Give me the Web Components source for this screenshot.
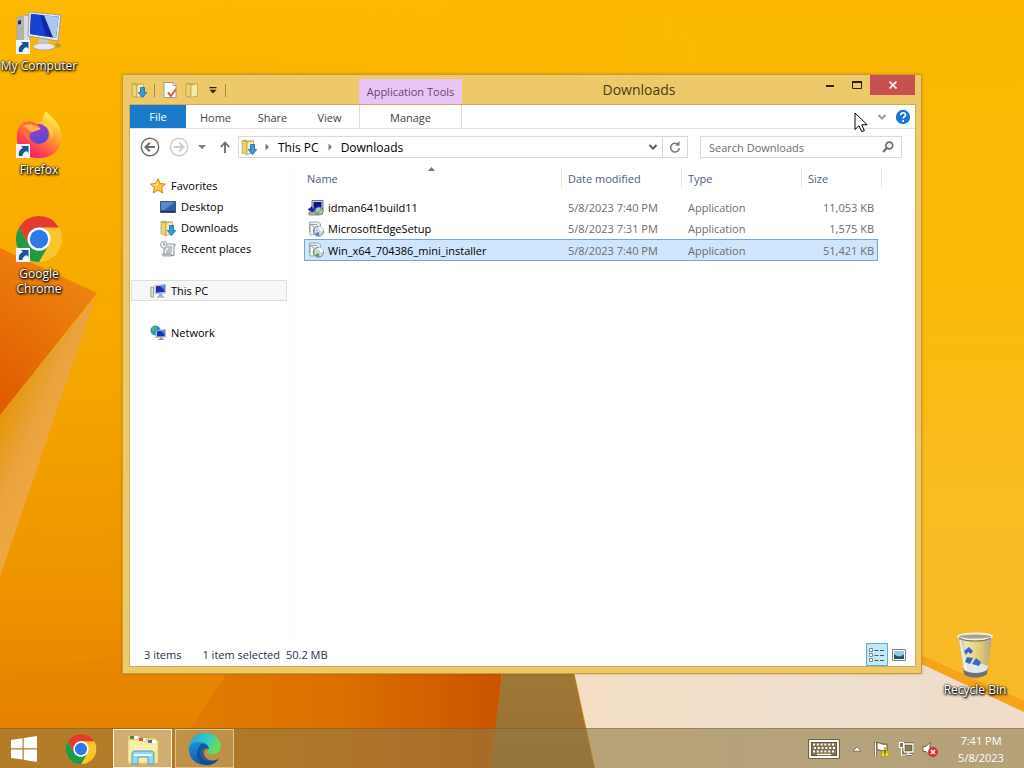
<!DOCTYPE html>
<html lang="en">
<head>
<meta charset="utf-8">
<title>Desktop</title>
<style>
html, body { margin: 0; height: 100%; overflow: hidden; }
body { font: 11px/15px "Open Sans", "Noto Sans", sans-serif; color: #000; }
</style>
</head>
<body>
<desktop-shell></desktop-shell>
<script>
const folder = (x) => `<path d="M1 1.5 5 .5l1 1h6.5V15H3z" fill="#cfae3f"/><path d="M1 1.5 6 3v12.5L1 14z" fill="#ecd473" stroke="#b79a3c" stroke-width=".7"/><path d="M6 3l6.5-1.2v12L6 15.500z" fill="#f8eba9" stroke="#b99d45" stroke-width=".7"/>${x}`;
const blueArrow = `<path d="M9.500 5.500h4v5h2.200L11.500 15.600 7.300 10.500h2.200z" fill="#2f9be0" stroke="#1767a8" stroke-width=".8"/>`;
const shortcut = `<rect x="1" y="33" width="14" height="14" fill="#f3f6fa"/><path d="M4 45c-1-4 1-7 4-8l-2-2h7.500v7l-2-2c-3 1-4 3-4 5z" fill="#1a5390"/>`;
const chrome = `<circle cx="24" cy="24" r="23" fill="#fbc62c"/><path d="M24 1A23 23 0 0 0 4.080 12.500L14 29.700 24 12.500h19.920A23 23 0 0 0 24 1z" fill="#e33b2e"/><path d="M4.080 12.500A23 23 0 0 0 24 47l9.960-17.250A11.500 11.500 0 0 1 14.040 29.750z" fill="#219a48"/><circle cx="24" cy="24" r="11.500" fill="#fff"/><circle cx="24" cy="24" r="9.200" fill="#2b79ea"/>`;
const disc = (c) => `<path d="M1.500 1h9l2 2v8h-11z" fill="#e9eef4" stroke="#8795a3" stroke-width=".8"/><path d="M3 3.500h6M3 5.500h3M3 7.500h3" stroke="#7d9cba" stroke-width=".9"/><path d="M2 14V3l4 3v8z" fill="#f7f7f2" stroke="#8a8a7a" stroke-width=".7"/><circle cx="10.500" cy="10.200" r="5" fill="#cfdce6" stroke="#5f7286" stroke-width=".9"/><path d="M10.500 5.200A5 5 0 0 1 15.500 10l-5 .2z" fill="#f4f9fc"/><path d="M6.500 13.500l4-3.300 1 5z" fill="${c}"/><circle cx="10.500" cy="10.200" r="1.300" fill="#fff" stroke="#74879a" stroke-width=".5"/><path d="M5 8l2 1.500L5 12z" fill="${c}"/>`;
const monitor = `<path d="M5 2.500 15.500 1.500v8.500L5 10.500z" fill="#d7dde6" stroke="#8e98a8" stroke-width=".6"/><path d="M6 3.300l8.700-.8v6.600L6 9.700z" fill="#1b2fb5"/><path d="M10 3l4.700-.5v5z" fill="#5f82e8"/><path d="M9 10.500h3l1 3H8.500z" fill="#a9b0bd"/><path d="M7 13.500h7v1H7z" fill="#8b93a2"/>`;
const ICONS = {
  folderDown: [16, folder(blueArrow)],
  folder: [16, folder('')],
  properties: [16, `<path d="M2 .5h9l3 3v12H2z" fill="#fff" stroke="#8e8b86" stroke-width=".8"/><path d="M11 .5v3h3" fill="#e5e5e5" stroke="#8e8b86" stroke-width=".7"/><path d="M6 10.500l3 3.500 5-7" fill="none" stroke="#e2592f" stroke-width="2"/>`],
  customise: [10, `<path d="M1.500 2h7v1.200h-7zM1.500 4.800h7L5 8.500z" fill="#2c220c"/>`],
  minimise: [12, `<path d="M2 6h8v2H2z" fill="#2b210c"/>`],
  maximise: [12, `<path d="M1.500 2.500h9v7h-9z" fill="none" stroke="#2b210c"/><path d="M1 2h10v2H1z" fill="#2b210c"/>`],
  close: [10, `<path d="M1.500 1.500l7 7m0-7l-7 7" stroke="#fff" stroke-width="1.700" fill="none"/>`],
  help: [16, `<circle cx="8" cy="8" r="7.200" fill="#1976d2"/><path d="M5.700 6.300c0-3.400 4.800-3.200 4.800-.4 0 1.900-2.300 1.800-2.300 3.700M8.200 11v1.900" fill="none" stroke="#fff" stroke-width="1.700"/>`],
  chevron: [10, `<path d="M1.500 3l3.500 3.700L8.500 3" fill="none" stroke="currentColor" stroke-width="1.900"/>`],
  back: [20, `<circle cx="10" cy="10" r="8.700" fill="none" stroke="currentColor" stroke-width="1.400"/><path d="M5.500 10h9.500M9.800 5.700 5.500 10l4.300 4.300" fill="none" stroke="currentColor" stroke-width="2.100"/>`],
  forward: [20, `<circle cx="10" cy="10" r="8.700" fill="none" stroke="currentColor" stroke-width="1.400"/><path d="M5 10h9.500M10.200 5.700l4.300 4.300-4.300 4.300" fill="none" stroke="currentColor" stroke-width="2.100"/>`],
  caret: [8, `<path d="M0 2h8L4 6.300z" fill="#808080"/>`],
  up: [12, `<path d="M6 12V1.500M1.800 6 6 1.500 10.200 6" fill="none" stroke="#6b6b6b" stroke-width="1.800"/>`],
  crumb: [8, `<path d="M2.500 .5 6 4 2.500 7.500z" fill="#777"/>`],
  refresh: [12, `<path d="M9.700 4.200A4.400 4.400 0 1 0 10.400 7" fill="none" stroke="#777" stroke-width="1.600"/><path d="M6 4.500h4.500V0z" fill="#777"/>`],
  search: [12, `<circle cx="7.300" cy="4.500" r="3.400" fill="none" stroke="#6c6c6c" stroke-width="1.700"/><path d="M4.800 7 1 11" stroke="#6c6c6c" stroke-width="2.100"/>`],
  star: [16, `<path d="M8 .7l2.200 4.900 5.300.5-4 3.600 1.200 5.300L8 12.200 3.300 15l1.200-5.300-4-3.600 5.300-.5z" fill="#ffc53b" stroke="#dc7b14" stroke-width="1"/><path d="M8 3v5L3 6.800l3.400-.5z" fill="#fff0b0"/>`],
  desktop: [16, `<path d="M.5 2.500h15v11H.5z" fill="#2c5faa" stroke="#35567f"/><path d="M1 3h14L4 11H1z" fill="#5689cf"/><path d="M1 12h14v1H1z" fill="#28334a"/>`],
  recent: [16, `<path d="M5 3h10v2h-1v9.500H4V8h1z" fill="#f0f1f2" stroke="#81878e" stroke-width=".9"/><path d="M7 6h5M8 8h4M6 10h6M6 12h5" stroke="#8998a9"/><circle cx="3.800" cy="3.800" r="3.300" fill="#eff4f8" stroke="#8590a0" stroke-width=".8"/><path d="M3.800 1.800v2.200h1.700" fill="none" stroke="#596b80" stroke-width=".8"/><path d="M2 13h9l1 2H3z" fill="#c9ccd0" stroke="#868b91" stroke-width=".7"/>`],
  pc: [16, `<path d="M.8 4h2.700v10H.8z" fill="#d9ddd9" stroke="#858b88" stroke-width=".7"/>${monitor}`],
  network: [16, `<circle cx="5.500" cy="5.500" r="5" fill="#2d91cd"/><path d="M2 2.500l3-1.500 1.500 2-2 2.500L2 7zM5 8l2-1v3H5z" fill="#55bd55"/><path d="M6 5.500l9.500-1v7.500L6 12.500z" fill="#ccd6e4" stroke="#7b8799" stroke-width=".5"/><path d="M7 6.300l7.700-.8v5.700L7 11.600z" fill="#1733ba"/><path d="M11 6l3.700-.5v4z" fill="#608bed"/><path d="M10 12.500h2.500V14H14v1H8.500v-1H10z" fill="#8793a5"/>`],
  idman: [16, `<path d="M4 .5h11v9H4z" fill="#d6d6cf" stroke="#555" stroke-width=".8"/><path d="M5.500 2h8v6h-8z" fill="#0b12a8"/><path d="M0 9.500l4-3v2h4l-3 4z" fill="#1325c9" stroke="#12143d" stroke-width=".5"/><path d="M1 12h9v3H1z" fill="#bbb" stroke="#444" stroke-width=".6"/><circle cx="11.300" cy="11" r="4" fill="#b6c6bb" stroke="#59685d" stroke-width=".8"/><path d="M8 13l3-2 1 4zM11 11l2-3.500 2 2z" fill="#57b35a"/>`],
  discBlue: [16, disc('#5186bd')],
  discGreen: [16, disc('#5ca34d')],
  details: [16, `<path d="M.5 1.500h3v3h-3zM.5 6.500h3v3h-3zM.5 11.500h3v3h-3z" fill="#fff" stroke="#6b8498" stroke-width=".9"/><path d="M5.500 3.500h4M11 3.500h4M5.500 8.500h4M11 8.500h4M5.500 13.500h4M11 13.500h4" stroke="#41566b"/>`],
  thumbs: [14, `<path d="M.5 1.500h13v11H.5z" fill="#fff" stroke="#75848f"/><path d="M2 3h10v8H2z" fill="#9dc9e9"/><path d="M2 6l3 2 3 .5 4-2V11H2z" fill="#245362"/>`],
  pcLarge: [48, `<path d="M2 11l7-3 6 1v27l-6 2-7-3z" fill="#d9dcda" stroke="#94989a" stroke-width=".7"/><path d="M2 11l7-3v29l-7-3z" fill="#aeb4b4"/><path d="M3 14l3-1v4l-3 .5z" fill="#2a3135"/><path d="M14 5l32 3-3 26-30-5z" fill="#e3e7e9" stroke="#8c9599" stroke-width=".8"/><path d="M16 7l27.500 2.700L41 31l-26-4z" fill="#0e28a5"/><path d="M16 7l9 1 6 21.500L15 27z" fill="#1642d0"/><path d="M29 8.200l14.500 1.500L41 31l-3-.5z" fill="#a9c9f4"/><path d="M24 32l9 1 1 6-11-1z" fill="#c6cbcd"/><ellipse cx="29" cy="39.500" rx="11" ry="3.500" fill="#e7eaeb" stroke="#969b9e" stroke-width=".7"/><path d="M40 37c4-3 6 0 6 3l-5 1z" fill="#c3963a"/>${shortcut}`],
  firefox: [48, `<defs><linearGradient id="a" x1=".8" y1=".1" x2=".25" y2=".95"><stop offset="0" stop-color="#fff44f"/><stop offset=".4" stop-color="#ff9a2c"/><stop offset=".75" stop-color="#ff4550"/><stop offset="1" stop-color="#f01d7c"/></linearGradient><linearGradient id="b" x2=".2" y2="1"><stop offset="0" stop-color="#9b3cd0"/><stop offset="1" stop-color="#5c48d0"/></linearGradient></defs><path d="M6 13c1 0 1-2 3-4l2 4 5-1c4-1 7-2 11-1 0-4 2-8 4-11 3 5 13 10 15 21 3 15-7 26-22 26S1 37 2 24c0-5 2-8 4-11z" fill="url(#a)"/><circle cx="24" cy="23" r="10" fill="url(#b)"/><path d="M9 12c5-3 11-1 14 2 2 2 3 3 1 5l-6 2c-5 1-4 6-2 9-8-3-10-10-7-18z" fill="#ff6a3c"/><path d="M8 15c6-3 12-1 18 3l-9 3z" fill="#ffb34a"/><path d="M29 12c8 3 11 9 7 16 1-6-2-12-8-14z" fill="#ffd348" opacity=".8"/>${shortcut}`],
  chromeLink: [48, chrome + shortcut],
  chrome: [48, chrome],
  bin: [48, `<defs><linearGradient id="g"><stop offset="0" stop-color="#b5bdbc"/><stop offset=".25" stop-color="#eee6b8"/><stop offset=".65" stop-color="#e2cc78"/><stop offset="1" stop-color="#aaa48c"/></linearGradient></defs><path d="M7 5l6 38c4 5 18 5 23 0l5-38z" fill="url(#g)" opacity=".93"/><path d="M12 37h25l-1 6c-5 5-19 5-23 0z" fill="#6e7476"/><path d="M12 35c8-5 18-3 25 0l-1 4c-6 4-17 4-23 0z" fill="#e4e7e5"/><ellipse cx="24" cy="5.500" rx="17" ry="3" fill="#aaa383" stroke="#eeeeea" stroke-width="1.800"/><path d="M8 7c6 4 26 4 32 0" fill="none" stroke="#77705a" stroke-width="1.200"/><path d="M13 20l5-4 4 4-2 3-3-2-2 3zM16 26l6 1-3 6-5-2zM21 33l4-6 5 4-2 4z" fill="#3569c9"/><path d="M9 9l6 30" stroke="#fff" stroke-width="1.500" opacity=".7"/>`],
  windows: [28, `<path d="M1 5 12.500 3.300v10H1zM13.700 3.100 27 1v12.300H13.700zM1 14.600h11.500v10L1 23zM13.700 14.600H27V27l-13.300-2.200z" fill="#fff"/>`],
  explorer: [36, `<path d="M3 5h11l1 2h16v26H3z" fill="#e9cf70"/><path d="M3 9l14-1 2 2 14-1v23H3z" fill="#f9eaa3" stroke="#dcbf62" stroke-width=".7"/><path d="M5 5h8v3H5z" fill="#fff"/><path d="M5 5h4v3H5z" fill="#33904c"/><path d="M14 7h7v3h-7z" fill="#fff"/><path d="M14 7h4v3h-4z" fill="#dd5542"/><path d="M23 9h8v3h-8z" fill="#fff"/><path d="M23 9h4v3h-4z" fill="#3679b3"/><path d="M4 15h28M4 18h28" stroke="#fff6c5"/><path d="M7 33V23c0-2 1-3 3-3h16c2 0 3 1 3 3v10h-6v-7H13v7z" fill="#95d5f3" stroke="#4b9fcb"/><path d="M9 24h18" stroke="#e4f8ff" stroke-width="2"/>`],
  edge: [34, `<defs><linearGradient id="e" x2="1" y2=".4"><stop offset="0" stop-color="#19a3dc"/><stop offset=".6" stop-color="#35c8cc"/><stop offset="1" stop-color="#67dd54"/></linearGradient><linearGradient id="f" x2=".3" y2="1"><stop offset="0" stop-color="#1b96dc"/><stop offset="1" stop-color="#1457a3"/></linearGradient></defs><path d="M1 16C2 6 9 1 17 1c10 0 16 7 16 13 0 7-6 9-11 8-3 0-4-1-2-3 3-4-2-9-8-9S2 12 1 16z" fill="url(#e)"/><path d="M1 16c1-5 6-7 11-6 5 0 9 3 9 7-2-2-5-2-7 0-4 5 0 13 9 12 3 0 6-1 8-3-3 5-8 7-13 7C8 33 0 26 1 16z" fill="url(#f)"/><path d="M13 12c-6 6-6 16 4 21 7 1 11-2 14-6-7 4-14 0-15-5-1-4 2-6 5-5-1-4-5-6-8-5z" fill="#104a95" opacity=".75"/>`],
  keyboard: [32, `<path d="M2 8h28v16H2z" fill="#807250" stroke="#5c5038" stroke-width="3.500"/><path d="M2 8h28v16H2z" fill="none" stroke="#fff" stroke-width="1.800"/><path d="M5 11.500h23M6 15h21M5 18.500h23" stroke="#fff" stroke-width="1.900" stroke-dasharray="2 1.800"/><path d="M9 21.500h14" stroke="#fff" stroke-width="1.300"/>`],
  tray: [10, `<path d="M1 7.200h8L5 2.800z" fill="#fff" stroke="#6c5b3d" stroke-width=".8"/>`],
  flag: [16, `<path d="M1.500 1v14.500" stroke="#66563a" stroke-width="3"/><path d="M1.500 1.500v14" stroke="#fff" stroke-width="1.500"/><path d="M3 2c3-1 4 2 10 1v7c-5 1-7-2-10-1z" fill="#fff" stroke="#66563a"/><path d="M11 6l4.800 9.500H6.500z" fill="#f3e02b" stroke="#aa970d" stroke-width=".7"/><path d="M11 9v3.500M11 13.500v1" stroke="#262300" stroke-width="1.200"/>`],
  ethernet: [16, `<path d="M6 3h9v8H6zM8 13.500h6" fill="#8a7b58" stroke="#5f5238" stroke-width="3"/><path d="M6 3h9v8H6zM10.500 11v2M8 13.500h6" fill="none" stroke="#fff" stroke-width="1.400"/><path d="M1.500 1.500h4v5h-4zM3.500 6.500V14H7" fill="#7d6f50" stroke="#fff" stroke-width="1.200"/>`],
  volume: [16, `<path d="M1 5.500h3L8 1.500v13L4 10.500H1z" fill="#fff" stroke="#655438" stroke-width=".9"/><circle cx="11" cy="11" r="4.600" fill="#d9363c" stroke="#a51f26" stroke-width=".6"/><path d="M9 9l4 4m0-4l-4 4" stroke="#fff" stroke-width="1.400"/>`],
  pointer: [20, `<path d="M1 1v16.500l4-3.800 2.800 6 2.600-1.200-2.700-5.700h5.500z" fill="#fff" stroke="#000"/>`]
};

class Part extends HTMLElement {
  constructor() { super(); this.attachShadow({ mode: 'open' }); }
  connectedCallback() { this.shadowRoot.innerHTML = this.view(); }
  attr(n, d = '') { return this.getAttribute(n) ?? d; }
}
const RESET = `*{box-sizing:border-box}button{font:inherit;color:inherit;background:none;border:0;padding:0;margin:0;display:flex;align-items:center;justify-content:center}a{color:inherit;text-decoration:none}`;

customElements.define('ui-icon', class extends Part {
  view() {
    const [box, body] = ICONS[this.attr('name')];
    const size = this.attr('size', box);
    return `<style>:host{display:inline-block;flex:none;width:${size}px;height:${size}px}svg{display:block;width:100%;height:100%}</style><svg viewBox="0 0 ${box} ${box}" aria-hidden="true">${body}</svg>`;
  }
});

customElements.define('wall-paper', class extends Part {
  view() {
    return `<style>:host{display:block}svg{display:block;width:100%;height:100%}</style>
<svg viewBox="0 0 1024 768" preserveAspectRatio="none" aria-hidden="true">
<defs>
<linearGradient id="base" x2="0" y2="1"><stop offset="0" stop-color="#ffb900"/><stop offset=".12" stop-color="#fcb400"/><stop offset=".5" stop-color="#f5a500"/><stop offset=".78" stop-color="#ee9200"/><stop offset="1" stop-color="#e27c00"/></linearGradient>
<linearGradient id="east" x2="0" y2="1"><stop offset="0" stop-color="#fcb900"/><stop offset=".4" stop-color="#fbba08"/><stop offset=".7" stop-color="#f9bc22"/><stop offset="1" stop-color="#f7b928"/></linearGradient>
<linearGradient id="fade"><stop offset="0" stop-color="#fff" stop-opacity="0"/><stop offset=".6" stop-color="#fff"/></linearGradient>
<mask id="blend"><path d="M200 0h824v768H200z" fill="url(#fade)"/></mask>
<linearGradient id="wedge" x1=".5" x2="0" y2="1"><stop offset="0" stop-color="#ee8510"/><stop offset="1" stop-color="#df5800"/></linearGradient>
<linearGradient id="beam" gradientUnits="userSpaceOnUse" x1="5" y1="410" x2="52" y2="430"><stop offset="0" stop-color="#e6980a"/><stop offset=".6" stop-color="#e9a23c"/><stop offset="1" stop-color="#eea640"/></linearGradient>
<linearGradient id="low"><stop offset="0" stop-color="#e07d00"/><stop offset=".5" stop-color="#dc7100"/><stop offset="1" stop-color="#cb5300"/></linearGradient>
<linearGradient id="brown" x2="0" y2="1"><stop offset="0" stop-color="#9c7b39"/><stop offset="1" stop-color="#9e6c2e"/></linearGradient>
<linearGradient id="cream"><stop offset="0" stop-color="#f4dfc4"/><stop offset=".6" stop-color="#efdfcf"/><stop offset="1" stop-color="#f0dcc7"/></linearGradient>
</defs>
<path d="M0 0h1024v768H0z" fill="url(#base)"/>
<path d="M200 0h824v712L900 655H200z" fill="url(#east)" mask="url(#blend)"/>
<path d="M0 415 96 296 0 577z" fill="url(#beam)"/>
<path d="M0 248 97 293 0 415z" fill="url(#wedge)"/>
<path d="M200 655h700l124 57v56H0V655z" fill="url(#base)" opacity="0"/>
<path d="M122 655h390v113H0V674z" fill="#e68400" opacity=".4"/>
<path d="M235 660h268l-10 108H165z" fill="url(#low)"/>
<path d="M504 660h67l23 108H490z" fill="url(#brown)"/>
<path d="M570 653h330l124 57v58H595z" fill="url(#cream)"/>
<path d="M900 646l124 55v11l-124-58z" fill="#f5a31a"/>
</svg>`;
  }
});

customElements.define('desk-icon', class extends Part {
  view() {
    return `<style>${RESET}:host{display:block;width:78px}button{width:100%;flex-direction:column;gap:3px;padding-top:7px;color:#fff;text-align:center;font-size:12px;line-height:15px;text-shadow:1px 1px 2px #000,0 1px 3px #000,0 0 2px #000}span{max-width:var(--label,78px)}</style>
<button><ui-icon name="${this.attr('icon')}"></ui-icon><span><slot></slot></span></button>`;
  }
});

customElements.define('title-bar', class extends Part {
  view() {
    return `<style>${RESET}:host{display:flex;height:30px;color:#4c3a12}
.quick{display:flex;align-items:center;width:229px;padding-left:1px;gap:7px}
i{width:1px;height:13px;background:#a98a45}
.context{align-self:flex-end;width:103px;height:26px;padding-top:5px;background:#e9c5f5;color:#664670;text-align:center;white-space:nowrap}
h1{flex:1;margin:0;font-size:14px;line-height:30px;font-weight:400;text-align:center}
.ctl{display:flex;align-items:flex-start}.ctl button{width:27px;height:20px}.ctl .close{width:45px;background:#c75050}</style>
<div class="quick"><ui-icon name="folderDown"></ui-icon><i></i><button aria-label="Properties"><ui-icon name="properties"></ui-icon></button><button aria-label="New folder"><ui-icon name="folder"></ui-icon></button><button aria-label="Customize toolbar"><ui-icon name="customise"></ui-icon></button><i></i></div>
<div class="context">Application Tools</div><h1>Downloads</h1>
<div class="ctl"><button aria-label="Minimize"><ui-icon name="minimise"></ui-icon></button><button aria-label="Maximize"><ui-icon name="maximise"></ui-icon></button><button class="close" aria-label="Close"><ui-icon name="close"></ui-icon></button></div>`;
  }
});

customElements.define('ribbon-tabs', class extends Part {
  view() {
    return `<style>${RESET}:host{display:flex;height:24px;background:#fff;border-bottom:1px solid #dfe0e1;color:#444}
button{width:57px;padding-top:2px}.file{width:56px;padding:0;margin-right:1px;background:#1979ca;color:#fff}.manage{width:103px;margin-left:1px;border:solid #e3d5e8;border-width:0 1px}
.end{margin-left:auto;display:flex;align-items:center;gap:8px;padding-right:4px}.end button{width:auto;padding:0;color:#999}</style>
<button class="file">File</button><button>Home</button><button>Share</button><button>View</button><button class="manage">Manage</button>
<div class="end"><button aria-label="Expand the ribbon"><ui-icon name="chevron"></ui-icon></button><button aria-label="Help"><ui-icon name="help"></ui-icon></button></div>`;
  }
});

customElements.define('address-row', class extends Part {
  view() {
    return `<style>${RESET}:host{display:flex;align-items:center;height:36px;padding:0 13px 0 10px;background:#fff}
.nav{display:flex;align-items:center;gap:9px;width:98px}
.nav button{color:#6d6d6d}.nav button:disabled{color:#ccc}.up{margin-left:4px}
.box{display:flex;align-items:center;height:22px;border:1px solid #d9d9d9}
.path{flex:1;padding-left:2px}.path>ui-icon{margin-right:2px}.path button{height:20px}
.path .sep{width:16px}.path .name{padding:0 3px;font-size:12px}
.path .drop{margin-left:auto;width:18px;color:#555}.path .reload{width:25px;border-left:1px solid #d9d9d9}
.find{width:202px;margin-left:12px;padding:0 7px 0 8px}input{flex:1;min-width:0;border:0;padding:0;outline:0;background:none;font:inherit;color:#6d6d6d}input::placeholder{color:#6d6d6d;opacity:1}</style>
<div class="nav"><button aria-label="Back"><ui-icon name="back"></ui-icon></button><button aria-label="Forward" disabled><ui-icon name="forward"></ui-icon></button><button aria-label="Recent locations"><ui-icon name="caret"></ui-icon></button><button class="up" aria-label="Up"><ui-icon name="up"></ui-icon></button></div>
<div class="box path"><ui-icon name="folderDown"></ui-icon><button class="sep" aria-label="Locations"><ui-icon name="crumb"></ui-icon></button><button class="name">This PC</button><button class="sep" aria-label="Folders"><ui-icon name="crumb"></ui-icon></button><button class="name">Downloads</button><button class="drop" aria-label="Previous locations"><ui-icon name="chevron"></ui-icon></button><button class="reload" aria-label="Refresh"><ui-icon name="refresh"></ui-icon></button></div>
<div class="box find"><input type="search" aria-label="Search Downloads" placeholder="Search Downloads"><ui-icon name="search"></ui-icon></div>`;
  }
});

customElements.define('nav-item', class extends Part {
  view() {
    return `<style>${RESET}:host{display:block}a{display:flex;align-items:center;gap:5px;height:21px;padding-left:18px;border:1px solid transparent}
:host([child]) a{padding-left:28px}:host([selected]) a{background:#f7f7f7;border-color:#dedede}</style><a href="#"><ui-icon name="${this.attr('icon')}"></ui-icon><slot></slot></a>`;
  }
});

customElements.define('nav-pane', class extends Part {
  view() {
    return `<style>${RESET}:host{display:block;box-sizing:border-box;width:164px;padding:10px 6px 0 1px;border-right:1px solid #fafafa}nav{display:grid;gap:21px}</style>
<nav aria-label="Places"><div><nav-item icon="star">Favorites</nav-item><nav-item child icon="desktop">Desktop</nav-item><nav-item child icon="folderDown">Downloads</nav-item><nav-item child icon="recent">Recent places</nav-item></div>
<nav-item selected icon="pc">This PC</nav-item><nav-item icon="network">Network</nav-item></nav>`;
  }
});

const FILES = [
  ['idman', 'idman641build11', '5/8/2023 7:40 PM', '11,053 KB'],
  ['discBlue', 'MicrosoftEdgeSetup', '5/8/2023 7:31 PM', '1,575 KB'],
  ['discGreen', 'Win_x64_704386_mini_installer', '5/8/2023 7:40 PM', '51,421 KB']
];
customElements.define('file-list', class extends Part {
  view() {
    return `<style>${RESET}:host{display:block;flex:1;min-width:0;padding:2px 0 0 10px}
table{width:578px;table-layout:fixed;border-collapse:separate;border-spacing:0}
th,td{padding:0;text-align:left;font-weight:400;white-space:nowrap}
th{height:21px;padding:2px 0 0 6px;color:#4c607a;border-left:1px solid #e6e6e6}th:first-child{padding-left:3px;border:0;position:relative}
th svg{position:absolute;left:124px;top:0}thead td{border-right:1px solid #e6e6e6}
tbody::before{content:"";display:block;height:9px}
tbody td{height:21px;color:#6d6d6d;padding-left:7px}tbody td:first-child{color:#000;padding-left:4px}td div{display:flex;align-items:center;gap:4px}
td:nth-child(4){text-align:right;padding:0 4px 0 0}
.sel td{height:22px;background:#cfe5fc;border:solid #7ba6c8;border-width:1px 0}.sel td:first-child{border-left-width:1px;padding-left:3px}.sel td:last-child{border-right-width:1px;padding-right:3px}</style>
<table><colgroup><col style="width:257px"><col style="width:120px"><col style="width:120px"><col style="width:77px"><col style="width:4px"></colgroup>
<thead><tr><th>Name<svg width="7" height="4" aria-hidden="true"><path d="M0 4 3.500 0 7 4z" fill="#777"/></svg></th><th>Date modified</th><th>Type</th><th>Size</th><td></td></tr></thead>
<tbody>${FILES.map(([i, n, d, s], k) => `<tr${k === 2 ? ' class="sel" aria-selected="true"' : ''}><td><div><ui-icon name="${i}"></ui-icon>${n}</div></td><td>${d}</td><td>Application</td><td>${s}</td></tr>`).join('')}</tbody></table>`;
  }
});

customElements.define('status-bar', class extends Part {
  view() {
    return `<style>${RESET}:host{display:flex;align-items:center;height:23px;padding:0 5px 0 14px;color:#1f2f4a}
.sel{margin-left:21px;margin-right:6px}.views{margin-left:auto;display:flex}.views button{width:22px;height:23px}.views .on{background:#c5e8f8;border:1px solid #56b0d8}</style>
<span>3 items</span><span class="sel">1 item selected</span><span>50.2 MB</span>
<div class="views"><button class="on" aria-label="Details"><ui-icon name="details"></ui-icon></button><button aria-label="Large icons"><ui-icon name="thumbs"></ui-icon></button></div>`;
  }
});

customElements.define('explorer-window', class extends Part {
  view() {
    return `<style>${RESET}:host{display:flex;flex-direction:column;box-sizing:border-box;padding:0 6px 7px 7px;background:#edc969;border:1px solid #c79a35;box-shadow:0 0 3px rgba(120,80,0,.35)}
title-bar,ribbon-tabs,address-row,status-bar{flex:none}.client{flex:1;display:flex;flex-direction:column;background:#fff;box-shadow:0 0 0 1px #cfaa58}.main{flex:1;display:flex;min-height:0}</style>
<title-bar></title-bar><div class="client"><ribbon-tabs></ribbon-tabs><address-row></address-row><div class="main"><nav-pane></nav-pane><file-list></file-list></div><status-bar></status-bar></div>`;
  }
});

customElements.define('task-bar', class extends Part {
  view() {
    return `<style>${RESET}:host{display:flex;height:40px;box-sizing:border-box;background:rgba(143,122,68,.6);border-top:1px solid rgba(95,75,25,.35);color:#fff}
.apps{display:flex;gap:3px}.apps button{width:59px;height:39px;border:1px solid transparent}.apps .start{width:48px}
.apps .on{background:rgba(235,215,170,.55);border-color:#fff4dc}.apps .open{background:rgba(225,200,150,.3);border-color:rgba(255,235,195,.55)}
.tray{margin-left:auto;display:flex;align-items:center}.keys{margin-right:12px}.more{margin-right:12px}.tray .sys{margin-right:8px}
time{width:86px;text-align:center;line-height:17px;padding-top:1px}</style>
<div class="apps"><button class="start" aria-label="Start"><ui-icon name="windows"></ui-icon></button><button aria-label="Google Chrome"><ui-icon name="chrome" size="32"></ui-icon></button><button class="on" aria-label="File Explorer"><ui-icon name="explorer"></ui-icon></button><button class="open" aria-label="Microsoft Edge"><ui-icon name="edge"></ui-icon></button></div>
<div class="tray"><button class="keys" aria-label="Touch keyboard"><ui-icon name="keyboard"></ui-icon></button><button class="more" aria-label="Show hidden icons"><ui-icon name="tray"></ui-icon></button><button class="sys" aria-label="Action Center"><ui-icon name="flag"></ui-icon></button><button class="sys" aria-label="Network"><ui-icon name="ethernet"></ui-icon></button><button aria-label="Volume muted"><ui-icon name="volume"></ui-icon></button><time>7:41 PM<br>5/8/2023</time></div>`;
  }
});

customElements.define('desktop-shell', class extends Part {
  view() {
    return `<style>:host{position:relative;display:flex;flex-direction:column;height:100vh;overflow:hidden}
wall-paper{position:absolute;inset:0}.desk{position:relative;flex:1}
.icons{display:grid;grid-auto-rows:104px;width:78px}
explorer-window{position:absolute;left:122px;top:74px;right:102px;bottom:54px}
.bin{position:absolute;right:10px;bottom:31px}.chrome{--label:50px}task-bar{position:relative}
.pointer{position:absolute;left:854px;top:112px}</style>
<wall-paper></wall-paper><div class="desk"><div class="icons"><desk-icon icon="pcLarge">My Computer</desk-icon><desk-icon icon="firefox">Firefox</desk-icon><desk-icon class="chrome" icon="chromeLink">Google Chrome</desk-icon></div>
<desk-icon class="bin" icon="bin">Recycle Bin</desk-icon><explorer-window></explorer-window></div><task-bar></task-bar><ui-icon class="pointer" name="pointer"></ui-icon>`;
  }
});
</script>
</body>
</html>
